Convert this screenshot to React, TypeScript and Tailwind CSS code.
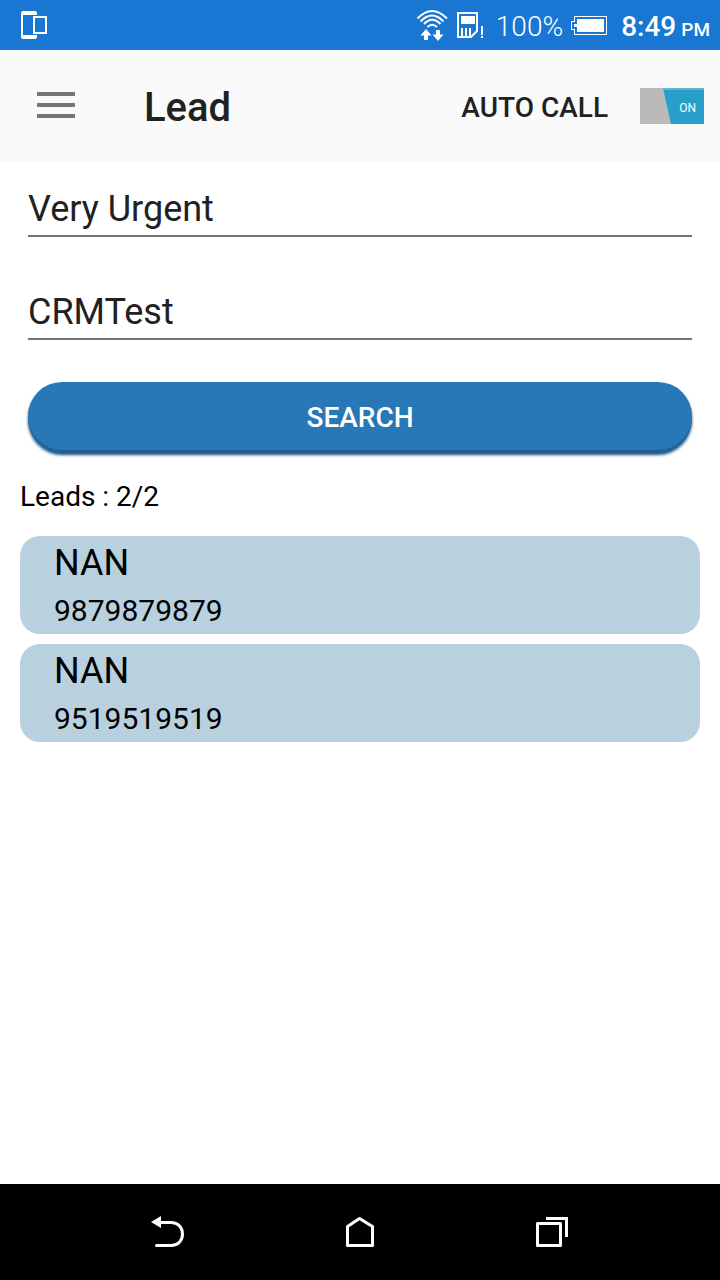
import { useState } from 'react';

const leads = [
  { name: 'NAN', phone: '9879879879' },
  { name: 'NAN', phone: '9519519519' },
];

function StatusBar() {
  return (
    <div className="flex h-[50px] items-center bg-[#1976d2] pr-[10px] pl-5 text-white">
      <svg className="h-[50px] w-7" viewBox="20 0 28 50" fill="none" aria-hidden="true">
        <rect x="21" y="11" width="16" height="28" rx="2" fill="#fff" />
        <rect x="23" y="15" width="12" height="20" fill="#1976d2" />
        <rect x="32" y="15" width="16" height="20" fill="#1976d2" />
        <rect x="34" y="17" width="12" height="16" stroke="#fff" strokeWidth="2" />
      </svg>
      <div className="ml-auto flex items-center">
        <svg className="h-[50px] w-[32px]" viewBox="416 0 32 50" fill="none" stroke="#fff" strokeWidth="2" aria-hidden="true">
          <path d="M417.500 18.500Q432 3.500 447 18.500M420.500 21.500Q432 9.500 443.500 21.500M424 24Q432 15.500 440.500 24M427.500 27Q432 22.500 437 27" />
          <path d="M426 29l5.500 6.500H428V40h-4v-4.500h-3.500zM438 41l-5.500-6.500H436V30h4v4.500h3.500z" fill="#fff" stroke="none" />
        </svg>
        <svg className="ml-2 h-[50px] w-[28px]" viewBox="456 0 28 50" fill="none" aria-hidden="true">
          <path d="M458 13h19v18l-6 6h-13z" stroke="#fff" strokeWidth="2" />
          <path d="M461 16h14v8h-14zM461 28h2v8h-2zM465 28h2v8h-2zM469 28h2v8h-2zM481 26h2v9h-2zM481 36h2v2h-2z" fill="#fff" />
        </svg>
        <span className="ml-3 pt-1 text-[28px] leading-[46px] font-light">100%</span>
        <svg className="ml-2 h-[50px] w-[36px]" viewBox="571 0 36 50" fill="none" shapeRendering="crispEdges" aria-hidden="true">
          <path d="M574.500 16.500h32v18h-32v-5h-3v-8h3z" stroke="#fff" strokeWidth="1" />
          <path d="M577 19h27v13h-27v-5h-3v-3h3z" fill="#fff" />
        </svg>
        <div className="ml-[14px] flex items-baseline gap-[5px] pt-1 font-medium">
          <span className="text-[28px] leading-[46px]">8:49</span>
          <span className="text-[19px]">PM</span>
        </div>
      </div>
    </div>
  );
}

function AutoCallSwitch() {
  const [on, setOn] = useState(true);
  return (
    <label className="flex cursor-pointer items-center gap-8">
      <span className="pt-1 text-[28px] font-medium">AUTO CALL</span>
      <span className="relative block h-9 w-16 bg-[#bababa]">
        <svg className="block h-9 w-16" viewBox="0 0 64 36" aria-hidden="true">
          {on ? (
            <>
              <path d="M23 0h41v36H31z" fill="#269fca" />
              <path d="M23 0h41v2H23.500z" fill="#60b6d5" />
            </>
          ) : (
            <path d="M0 0h41l-8 36H0z" fill="#8a8a8a" />
          )}
        </svg>
        <span
          className="absolute inset-y-0 right-2 flex items-center pt-1 text-[12px] text-white"
          aria-hidden="true"
        >
          {on ? 'ON' : 'OFF'}
        </span>
        <input
          type="checkbox"
          role="switch"
          checked={on}
          onChange={(e) => setOn(e.target.checked)}
          className="absolute inset-0 h-full w-full cursor-pointer opacity-0"
        />
      </span>
    </label>
  );
}

function NavigationBar() {
  const buttonClass = 'flex h-24 w-[120px] items-center justify-center';
  return (
    <nav className="flex h-24 items-center justify-between bg-black px-[15%]">
      <button type="button" aria-label="Back" className={buttonClass}>
        <svg width="48" height="48" viewBox="144 1208 48 48" fill="none" stroke="#fff" strokeWidth="3">
          <path d="M157 1222.500h14c7 0 11.500 5 11.500 11.500s-4.500 11.500-11.500 11.500h-14.500" strokeLinecap="round" />
          <path d="M151 1222l10-6v12z" fill="#fff" stroke="none" />
        </svg>
      </button>
      <button type="button" aria-label="Home" className={buttonClass}>
        <svg width="48" height="48" viewBox="336 1208 48 48" fill="none" stroke="#fff" strokeWidth="3" strokeLinejoin="round">
          <path d="M347.500 1245.500v-19l12-8 13 8v19z" />
        </svg>
      </button>
      <button type="button" aria-label="Recent apps" className={buttonClass}>
        <svg width="48" height="48" viewBox="528 1208 48 48" fill="none" stroke="#fff" strokeWidth="3">
          <path d="M537.500 1223.500h23v22h-23z" strokeLinejoin="round" />
          <path d="M546 1218.500h20.500v18.500" />
        </svg>
      </button>
    </nav>
  );
}

export default function App() {
  const [priority, setPriority] = useState('Very Urgent');
  const [campaign, setCampaign] = useState('CRMTest');
  const fieldClass =
    'block h-[54px] w-full border-b-2 border-[#757575] bg-transparent text-4xl text-[#212121] outline-none';

  return (
    <div className="flex min-h-screen flex-col bg-white font-['Roboto',sans-serif]">
      <StatusBar />
      <header className="flex h-28 items-center bg-[#fafafa] px-4 text-[#212121]">
        <button type="button" aria-label="Open menu" className="flex h-20 w-20 items-center justify-center">
          <svg width="38" height="28" viewBox="0 0 38 28" fill="#757575">
            <path d="M0 0h38v4H0zM0 11h38v4H0zM0 22h38v4H0z" />
          </svg>
        </button>
        <h1 className="ml-12 pt-1 text-[40px] font-medium">Lead</h1>
        <div className="ml-auto">
          <AutoCallSwitch />
        </div>
      </header>

      <main className="flex-1 px-5 pt-[21px]">
        <form className="px-2" onSubmit={(e) => e.preventDefault()}>
          <div className="flex flex-col gap-[49px]">
            <input
              aria-label="Priority"
              type="text"
              value={priority}
              onChange={(e) => setPriority(e.target.value)}
              className={fieldClass}
            />
            <input
              aria-label="Campaign"
              type="text"
              value={campaign}
              onChange={(e) => setCampaign(e.target.value)}
              className={fieldClass}
            />
          </div>
          <button
            type="submit"
            className="mt-[42px] block h-[70px] w-full rounded-[34px] bg-[#2878b8] pt-[2px] text-[28px] font-medium text-white shadow-[0_3px_3px_#1c5480,inset_0_-2px_0_#1f5f92]"
          >
            SEARCH
          </button>
        </form>

        <p className="mt-[27px] text-[28px] leading-9 text-black">Leads : 2/2</p>

        <ul className="mt-[21px] flex flex-col gap-[10px]">
          {leads.map((lead) => (
            <li key={lead.phone} className="rounded-[20px] bg-[#b9d1df] pb-[2px] pl-[34px] text-black">
              <p className="text-4xl leading-[54px]">{lead.name}</p>
              <p className="text-3xl leading-[42px]">{lead.phone}</p>
            </li>
          ))}
        </ul>
      </main>

      <NavigationBar />
    </div>
  );
}
